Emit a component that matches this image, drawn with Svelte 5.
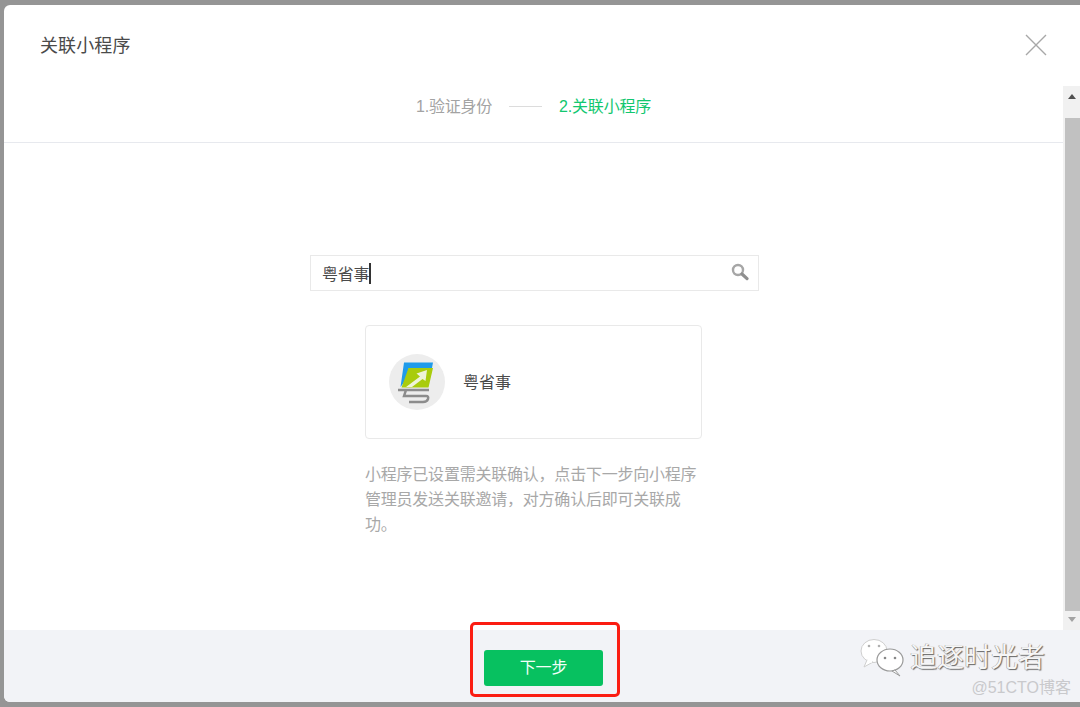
<script>
  const steps = [
    { label: '1.验证身份', active: false },
    { label: '2.关联小程序', active: true }
  ];
  let keyword = '粤省事';
</script>

<div class="dialog">
  <header class="head">
    <h2>关联小程序</h2>
    <svg class="close" viewBox="0 0 22 22" width="22" height="22">
      <path d="M1 1 21 21M21 1 1 21" stroke="#a8a8a8" stroke-width="1.4" fill="none" />
    </svg>
  </header>

  <div class="scroller">
    <div class="content">
      <div class="steps">
        {#each steps as step, i}
          {#if i > 0}<span class="dash"></span>{/if}
          <span class:active={step.active}>{step.label}</span>
        {/each}
      </div>

      <div class="main">
        <div class="search">
          <span class="value">{keyword}</span><span class="caret"></span>
          <svg class="lens" viewBox="0 0 18 18" width="18" height="18">
            <circle cx="7" cy="7" r="5" fill="none" stroke="#a6a6a6" stroke-width="2.4" />
            <path d="M11 11 16 15.6" stroke="#8f8f8f" stroke-width="3.2" stroke-linecap="round" />
          </svg>
        </div>

        <div class="card">
          <div class="avatar">
            <svg viewBox="0 0 56 56" width="56" height="56">
              <path d="M15 8.5H44L43 14H20L16 27 11.5 33Z" fill="#1f9bea" />
              <path d="M19.5 14H44L39.5 33.5H12.5Z" fill="#a9cc0c" />
              <path d="M17 33 31 22.5 27.5 19.5 38 16 36.5 27 33.5 25 23 33Z" fill="#eef3d8" />
              <path d="M9 36H40M17 36 15 42H37Q40 42 39 45 38 48 34 48H20" fill="none" stroke="#8c8c8c" stroke-width="2.4" />
            </svg>
          </div>
          <span class="name">粤省事</span>
        </div>

        <p class="tip">小程序已设置需关联确认，点击下一步向小程序管理员发送关联邀请，对方确认后即可关联成功。</p>
      </div>
    </div>

    <div class="scrollbar">
      <span class="arrow up"></span>
      <div class="thumb"></div>
      <span class="arrow down"></span>
    </div>
  </div>

  <footer class="foot">
    <button class="next">下一步</button>
    <div class="mark"></div>
  </footer>
</div>

<div class="watermark">
  <svg viewBox="0 0 44 40" width="44" height="40">
    <ellipse cx="14" cy="13" rx="13" ry="11.5" fill="#fff" stroke="#cfcfcf" />
    <path d="M7 22 4 29 13 24Z" fill="#fff" stroke="#cfcfcf" />
    <path d="M7.5 21.6 12 24" stroke="#fff" stroke-width="2" />
    <ellipse cx="30" cy="22" rx="13" ry="11" fill="#fff" stroke="#9a9a9a" stroke-width="1.2" />
    <path d="M35 32 40 38 32 33Z" fill="#fff" stroke="#9a9a9a" />
    <circle cx="9" cy="8" r="1.3" fill="#b0b0b0" />
    <circle cx="19" cy="8" r="1.3" fill="#b0b0b0" />
    <circle cx="25" cy="20" r="1.3" fill="#888" />
    <circle cx="35" cy="20" r="1.3" fill="#888" />
  </svg>
  <span class="wm-name">追逐时光者</span>
  <span class="wm-site">@51CTO博客</span>
</div>

<style>
  :global(body) {
    margin: 0;
    background: #959595;
    font-family: "Liberation Sans", "Noto Sans CJK SC", sans-serif;
  }

  .dialog {
    display: flex;
    flex-direction: column;
    height: 697px;
    margin: 5px 0 0 4px;
    background: #fff;
    border-radius: 6px 0 0 6px;
    overflow: hidden;
  }

  .head {
    flex: none;
    display: flex;
    align-items: center;
    justify-content: space-between;
    height: 81px;
    padding: 0 33px 0 36px;
    box-sizing: border-box;
  }

  h2 {
    margin: -3px 0 0;
    font-size: 18px;
    font-weight: 400;
    letter-spacing: 0.1px;
    color: #4a4a4a;
  }

  .close {
    margin-top: -1px;
  }

  .scroller {
    flex: none;
    display: flex;
    height: 544px;
  }

  .content {
    flex: 1;
    display: flex;
    flex-direction: column;
  }

  .steps {
    flex: none;
    display: flex;
    align-items: center;
    justify-content: center;
    gap: 17px;
    height: 57px;
    padding-bottom: 18px;
    box-sizing: border-box;
    border-bottom: 1px solid #e7e9ee;
    font-size: 16px;
    letter-spacing: -0.2px;
    color: #a3a3a3;
  }

  .steps .active {
    color: #12c76f;
  }

  .dash {
    width: 33px;
    height: 1px;
    margin-top: 2px;
    background: #dcdcdc;
  }

  .main {
    width: 448.5px;
    margin: 112px 0 0 306px;
  }

  .search {
    display: flex;
    align-items: center;
    height: 36px;
    padding: 0 9px 0 11px;
    box-sizing: border-box;
    border: 1px solid #e9e9e9;
    font-size: 16px;
    letter-spacing: -0.3px;
    color: #4a4a4a;
  }

  .caret {
    width: 1.5px;
    height: 21px;
    background: #333;
  }

  .lens {
    margin: -3px 0 0 auto;
  }

  .card {
    display: flex;
    align-items: center;
    gap: 18px;
    width: 337px;
    height: 114px;
    margin: 34px 0 0 55px;
    padding-left: 23px;
    box-sizing: border-box;
    border: 1px solid #e9e9e9;
    border-radius: 4px;
  }

  .avatar {
    display: flex;
    width: 56px;
    height: 56px;
    border-radius: 50%;
    background: #ededed;
    overflow: hidden;
  }

  .name {
    margin-top: -3px;
    font-size: 16px;
    color: #4a4a4a;
  }

  .tip {
    width: 337px;
    margin: 23px 0 0 55px;
    font-size: 16px;
    line-height: 25px;
    letter-spacing: -0.22px;
    color: #a8a8a8;
  }

  .scrollbar {
    flex: none;
    display: flex;
    flex-direction: column;
    align-items: center;
    width: 17px;
    background: #f1f1f1;
  }

  .thumb {
    flex: 1;
    width: 15px;
    margin-left: 2px;
    background: #c1c1c1;
  }

  .arrow {
    flex: none;
    width: 0;
    height: 0;
    border-left: 4px solid transparent;
    border-right: 4px solid transparent;
  }

  .arrow.up {
    margin: 8px 0 19px;
    border-bottom: 5px solid #505050;
  }

  .arrow.down {
    margin: 6px 0 8px;
    border-top: 5px solid #a3a3a3;
  }

  .foot {
    flex: 1;
    position: relative;
    display: flex;
    align-items: center;
    background: #f2f3f7;
  }

  .next {
    width: 119px;
    height: 36px;
    margin: 3px 0 0 480px;
    padding: 0 0 3px;
    border: 0;
    border-radius: 3px;
    background: #07c160;
    color: #f2fff8;
    font: inherit;
    font-size: 16px;
    letter-spacing: -0.2px;
  }

  /* red annotation drawn over the screenshot */
  .mark {
    position: absolute;
    left: 466px;
    top: -8px;
    width: 144px;
    height: 69px;
    border: 3px solid #fb1d12;
    border-radius: 5px;
  }

  .watermark {
    position: absolute;
    left: 860px;
    top: 638px;
    width: 220px;
    height: 69px;
  }

  .watermark svg {
    position: absolute;
    left: 0;
    top: 0;
  }

  .wm-name {
    position: absolute;
    left: 50px;
    top: 2px;
    font-size: 27px;
    line-height: 36px;
    color: #f6f6f6;
    text-shadow: 1px 1px 1px #666, -0.5px -0.5px 0 #999;
    white-space: nowrap;
  }

  .wm-site {
    position: absolute;
    right: 9px;
    top: 40px;
    font-size: 16px;
    line-height: 20px;
    color: #c9c9cc;
    white-space: nowrap;
  }
</style>
